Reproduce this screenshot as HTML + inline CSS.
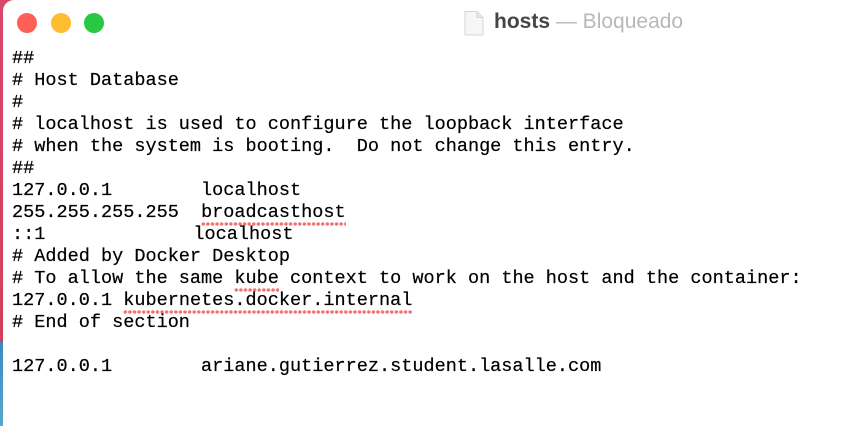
<!DOCTYPE html>
<html><head><meta charset="utf-8"><style>
html,body{margin:0;padding:0;width:850px;height:426px;overflow:hidden;background:#fff}
.strip{position:absolute;left:0;top:0;width:3px;height:426px;background:linear-gradient(#d8466a 0,#d0405c 342px,#3a8ac0 342px,#5aa6d0 426px)}
.corner{position:absolute;left:0;top:0;width:14px;height:14px;background:#d8466a}
.win{position:absolute;left:3px;top:0;right:0;bottom:0;background:#fff;border-top-left-radius:11px}
.dot{position:absolute;top:13px;width:20px;height:20px;border-radius:50%}
.title{position:absolute;left:494px;top:10px;font-family:"Liberation Sans",sans-serif;font-size:21px;color:#b8b8b8;white-space:pre}
.title b{color:#454545}
pre{position:absolute;left:12px;top:48px;margin:0;font-family:"Liberation Mono",monospace;font-size:18.55px;line-height:22px;color:#000;-webkit-text-stroke:0.2px #000}
.sp{background-image:radial-gradient(circle,#f07272 1.6px,transparent 1.9px);background-size:4.6px 4px;background-repeat:repeat-x;background-position:0 100%;padding-bottom:3px}
</style></head><body>
<div class="corner"></div>
<div class="strip"></div>
<div class="win"></div>
<div class="dot" style="left:17px;background:#fe5f57"></div>
<div class="dot" style="left:51px;background:#febc2e"></div>
<div class="dot" style="left:84px;background:#28c840"></div>
<svg style="position:absolute;left:463px;top:10px" width="22" height="26" viewBox="0 0 22 26"><path d="M2 1.5h12l6 6v16.5a1 1 0 0 1-1 1H3a1 1 0 0 1-1-1z" fill="#f6f6f6" stroke="#d4d4d4"/><path d="M14 1.5v6h6" fill="#e8e8e8" stroke="#d4d4d4"/></svg>
<div class="title"><b>hosts</b> — Bloqueado</div>
<pre>##
# Host Database
#
# localhost is used to configure the loopback interface
# when the system is booting.  Do not change this entry.
##
127.0.0.1        localhost
255.255.255.255  <span class="sp">broadcasthost</span>
::1<span style="display:inline-block;width:148px"></span>localhost
# Added by Docker Desktop
# To allow the same <span class="sp">kube</span> context to work on the host and the container:
127.0.0.1 <span class="sp">kubernetes.docker.internal</span>
# End of section

127.0.0.1        ariane.gutierrez.student.lasalle.com</pre>
</body></html>
